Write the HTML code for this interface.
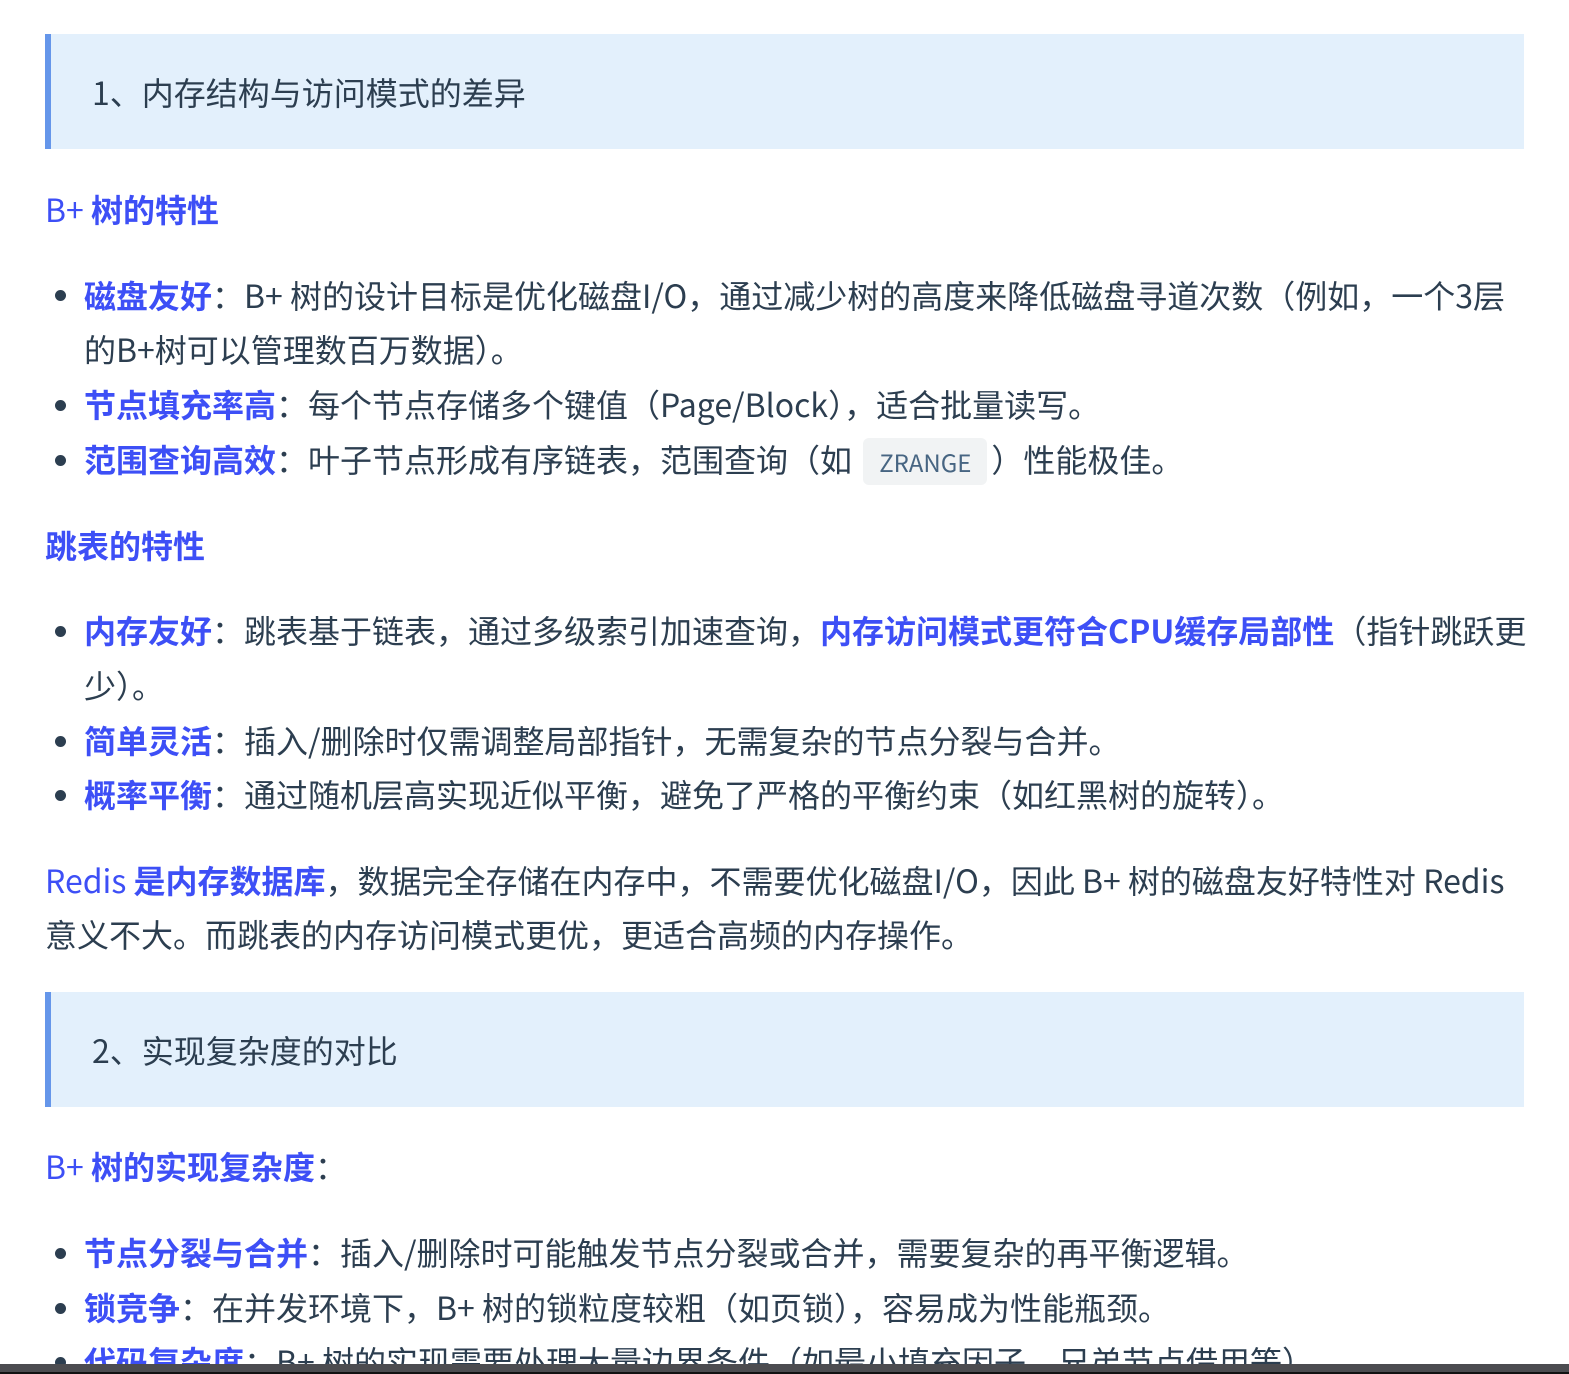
<!DOCTYPE html>
<html><head><meta charset="utf-8"><style>
html,body{margin:0;padding:0;background:#fff;width:1569px;height:1374px;overflow:hidden;position:relative}
body{font-family:"Noto Sans CJK SC","Liberation Sans",sans-serif;color:#2c3e50;font-size:32px}
.l{position:absolute;line-height:54px;height:54px;white-space:nowrap;margin-top:-1px}
.b{color:#3d4ff6;font-weight:bold}
.bl{color:#3d4ff6}
.q{position:absolute;left:45px;width:1479px;height:115px;background:#e3f0fc;border-left:6px solid #6596ea;box-sizing:border-box}
.dot{position:absolute;left:55px;width:11px;height:11px;border-radius:50%;background:#2c3e50}
code{font-family:"Noto Sans CJK SC",sans-serif;font-size:24px;background:#f1f3f4;color:#476582;border-radius:6px;padding:6px 16px;margin:0 4px}
.bar{position:absolute;left:0;top:1364px;width:1569px;height:10px;background:#4c4c50;border-bottom:2px solid #111;box-sizing:border-box}
</style></head><body>
<div class="q" style="top:34px"></div>
<div class="l" style="left:92px;top:66px">1、内存结构与访问模式的差异</div>
<div class="l bl" style="left:45px;top:183px">B+ <b>树的特性</b></div>
<div class="dot" style="top:290px"></div>
<div class="l" style="left:84px;top:269px"><span class="b">磁盘友好</span>：B+ 树的设计目标是优化磁盘I/O，通过减少树的高度来降低磁盘寻道次数（例如，一个3层</div>
<div class="l" style="left:84px;top:323px">的B+树可以管理数百万数据）。</div>
<div class="dot" style="top:400px"></div>
<div class="l" style="left:84px;top:378px"><span class="b">节点填充率高</span>：每个节点存储多个键值（Page/Block），适合批量读写。</div>
<div class="dot" style="top:455px"></div>
<div class="l" style="left:84px;top:433px"><span class="b">范围查询高效</span>：叶子节点形成有序链表，范围查询（如 <code>ZRANGE</code>）性能极佳。</div>
<div class="l b" style="left:45px;top:519px">跳表的特性</div>
<div class="dot" style="top:626px"></div>
<div class="l" style="left:84px;top:604px"><span class="b">内存友好</span>：跳表基于链表，通过多级索引加速查询，<span class="b">内存访问模式更符合CPU缓存局部性</span>（指针跳跃更</div>
<div class="l" style="left:84px;top:659px">少）。</div>
<div class="dot" style="top:736px"></div>
<div class="l" style="left:84px;top:714px"><span class="b">简单灵活</span>：插入/删除时仅需调整局部指针，无需复杂的节点分裂与合并。</div>
<div class="dot" style="top:790px"></div>
<div class="l" style="left:84px;top:768px"><span class="b">概率平衡</span>：通过随机层高实现近似平衡，避免了严格的平衡约束（如红黑树的旋转）。</div>
<div class="l" style="left:45px;top:854px"><span class="bl">Redis <b>是内存数据库</b></span>，数据完全存储在内存中，不需要优化磁盘I/O，因此 B+ 树的磁盘友好特性对 Redis</div>
<div class="l" style="left:45px;top:908px">意义不大。而跳表的内存访问模式更优，更适合高频的内存操作。</div>
<div class="q" style="top:992px"></div>
<div class="l" style="left:92px;top:1024px">2、实现复杂度的对比</div>
<div class="l" style="left:45px;top:1140px"><span class="bl">B+ <b>树的实现复杂度</b></span>：</div>
<div class="dot" style="top:1248px"></div>
<div class="l" style="left:84px;top:1226px"><span class="b">节点分裂与合并</span>：插入/删除时可能触发节点分裂或合并，需要复杂的再平衡逻辑。</div>
<div class="dot" style="top:1303px"></div>
<div class="l" style="left:84px;top:1281px"><span class="b">锁竞争</span>：在并发环境下，B+ 树的锁粒度较粗（如页锁），容易成为性能瓶颈。</div>
<div class="dot" style="top:1357px"></div>
<div class="l" style="left:84px;top:1335px"><span class="b">代码复杂度</span>：B+ 树的实现需要处理大量边界条件（如最小填充因子、兄弟节点借用等）</div>
<div class="bar"></div>
</body></html>
